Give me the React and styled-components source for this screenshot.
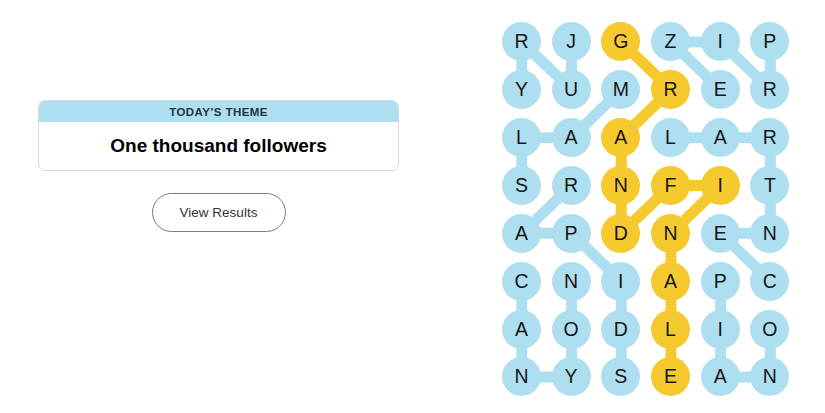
import styled, { createGlobalStyle } from 'styled-components';

const COL_W = 49.7;
const ROW_H = 47.86;

const GRID = [
  'RJGZIP',
  'YUMRER',
  'LAALAR',
  'SRNFIT',
  'APDNEN',
  'CNIAPC',
  'AODLIO',
  'NYSEAN',
];

// each word is a path of [row, col] cells
const WORDS = [
  { found: 'theme', path: [[0, 1], [1, 1], [0, 0], [1, 0]] }, // JURY
  { found: 'theme', path: [[0, 5], [1, 5], [0, 4], [0, 3], [1, 4]] }, // PRIZE
  { found: 'theme', path: [[3, 0], [2, 0], [2, 1], [1, 2]] }, // SLAM
  { found: 'theme', path: [[3, 1], [4, 0], [4, 1], [5, 2], [6, 2], [7, 2]] }, // RAPIDS
  { found: 'theme', path: [[5, 0], [6, 0], [7, 0], [7, 1], [6, 1], [5, 1]] }, // CANYON
  { found: 'theme', path: [[5, 5], [4, 4], [4, 5], [3, 5], [2, 5], [2, 4], [2, 3]] }, // CENTRAL
  { found: 'theme', path: [[5, 4], [6, 4], [7, 4], [7, 5], [6, 5]] }, // PIANO
  {
    found: 'spangram',
    path: [[0, 2], [1, 3], [2, 2], [3, 2], [4, 2], [3, 3], [3, 4], [4, 3], [5, 3], [6, 3], [7, 3]],
  }, // GRANDFINALE
];

const COLORS = {
  theme: '#aedff0',
  spangram: '#f6ca2e',
};

const GlobalStyle = createGlobalStyle`
  body {
    margin: 0;
    background: #ffffff;
    font-family: 'Liberation Sans', Arial, sans-serif;
    color: #121212;
  }
`;

const Pagina = styled.div`
  display: flex;
  width: 825px;
  height: 413px;
  overflow: hidden;
`;

const PainelEsquerdo = styled.div`
  width: 399px;
  box-sizing: border-box;
  padding: 100px 0 0 38px;
  display: flex;
  flex-direction: column;
  align-items: center;
`;

const CartaoTema = styled.div`
  width: 361px;
  box-sizing: border-box;
  border: 1px solid #d9d9d9;
  border-radius: 7px;
  overflow: hidden;
`;

const CabecalhoTema = styled.div`
  height: 21px;
  background: #aedff0;
  display: flex;
  align-items: center;
  justify-content: center;
  font-size: 11.5px;
  font-weight: 700;
  letter-spacing: 0.4px;
  color: #22343c;
`;

const TextoTema = styled.div`
  height: 48px;
  display: flex;
  align-items: center;
  justify-content: center;
  font-size: 19px;
  font-weight: 700;
  color: #000;
`;

const BotaoResultados = styled.button`
  margin-top: 22px;
  width: 134px;
  height: 39px;
  border: 1px solid #7c7c7c;
  border-radius: 20px;
  background: #fff;
  font-family: 'Liberation Sans', Arial, sans-serif;
  font-size: 13.5px;
  color: #333;
  cursor: pointer;
`;

const Tabuleiro = styled.div`
  position: relative;
  margin: 18px 0 0 97.6px;
  display: grid;
  grid-template-columns: repeat(6, ${COL_W}px);
  grid-template-rows: repeat(8, ${ROW_H}px);
  align-self: flex-start;
`;

const Linhas = styled.svg`
  position: absolute;
  inset: 0;
  width: 100%;
  height: 100%;
  overflow: visible;
`;

const Celula = styled.div`
  position: relative;
  display: flex;
  align-items: center;
  justify-content: center;
`;

const Letra = styled.div`
  width: 39px;
  height: 39px;
  border-radius: 50%;
  background: ${(p) => p.$cor};
  display: flex;
  align-items: center;
  justify-content: center;
  font-family: 'Liberation Sans', Arial, sans-serif;
  font-size: 19.5px;
  color: #161616;
`;

const centro = ([r, c]) => [c * COL_W + COL_W / 2, r * ROW_H + ROW_H / 2];

function App() {
  const corDaCelula = {};
  WORDS.forEach((w) => w.path.forEach(([r, c]) => (corDaCelula[`${r}-${c}`] = COLORS[w.found])));

  return (
    <Pagina>
      <GlobalStyle />
      <PainelEsquerdo>
        <CartaoTema>
          <CabecalhoTema>TODAY’S THEME</CabecalhoTema>
          <TextoTema>One thousand followers</TextoTema>
        </CartaoTema>
        <BotaoResultados>View Results</BotaoResultados>
      </PainelEsquerdo>

      <Tabuleiro>
        <Linhas>
          {WORDS.map((w, i) => (
            <polyline
              key={i}
              points={w.path.map((p) => centro(p).join(',')).join(' ')}
              fill="none"
              stroke={COLORS[w.found]}
              strokeWidth="11"
              strokeLinejoin="round"
              strokeLinecap="round"
            />
          ))}
        </Linhas>
        {GRID.map((linha, r) =>
          linha.split('').map((letra, c) => (
            <Celula key={`${r}-${c}`}>
              <Letra $cor={corDaCelula[`${r}-${c}`] || COLORS.theme}>{letra}</Letra>
            </Celula>
          ))
        )}
      </Tabuleiro>
    </Pagina>
  );
}

export default App;
